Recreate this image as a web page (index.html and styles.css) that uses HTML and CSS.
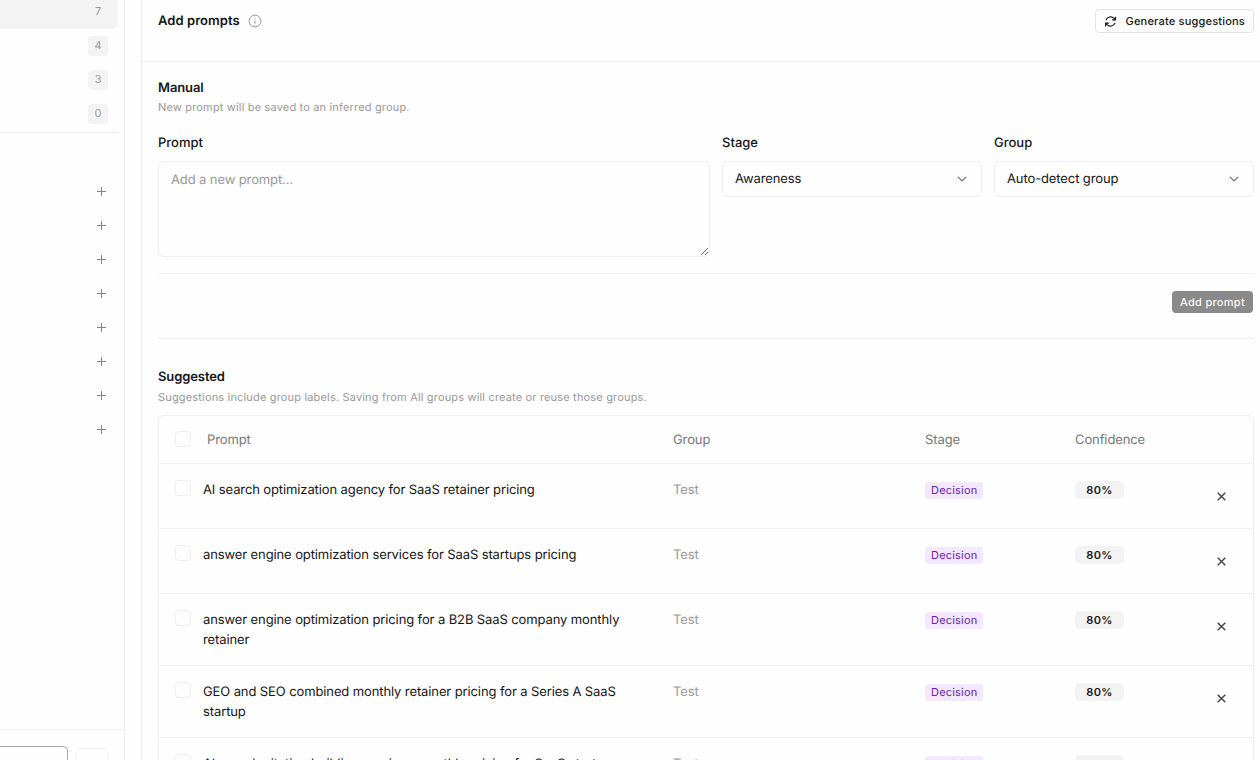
FILE: index.html
```html
<!DOCTYPE html>
<html lang="en">
<head>
  <meta charset="UTF-8">
  <meta name="viewport" content="width=device-width, initial-scale=1.0">
  <title>Add prompts</title>
  <link rel="stylesheet" href="styles.css">
</head>
<body>
  <svg class="sprite" aria-hidden="true">
    <symbol id="plus" viewBox="0 0 11 11"><path d="M5.5 1v9M1 5.5h9"/></symbol>
    <symbol id="close" viewBox="0 0 11 11"><path d="M1.7 1.7l7.6 7.6M9.3 1.7l-7.6 7.6"/></symbol>
    <symbol id="chevron" viewBox="0 0 12 12"><path d="M2 4l4 4 4-4"/></symbol>
  </svg>

  <aside class="sidebar">
    <nav class="filters">
      <div class="filter active"><span class="count">7</span></div>
      <div class="filter"><span class="count">4</span></div>
      <div class="filter"><span class="count">3</span></div>
      <div class="filter"><span class="count">0</span></div>
    </nav>
    <div class="groups">
      <button class="add-group" aria-label="Add"><svg><use href="#plus"/></svg></button>
      <button class="add-group" aria-label="Add"><svg><use href="#plus"/></svg></button>
      <button class="add-group" aria-label="Add"><svg><use href="#plus"/></svg></button>
      <button class="add-group" aria-label="Add"><svg><use href="#plus"/></svg></button>
      <button class="add-group" aria-label="Add"><svg><use href="#plus"/></svg></button>
      <button class="add-group" aria-label="Add"><svg><use href="#plus"/></svg></button>
      <button class="add-group" aria-label="Add"><svg><use href="#plus"/></svg></button>
      <button class="add-group" aria-label="Add"><svg><use href="#plus"/></svg></button>
    </div>
    <div class="sidebar-footer">
      <div class="footer-input"></div>
      <div class="footer-button"></div>
    </div>
  </aside>

  <main class="panel">
    <header class="panel-header">
      <h1>Add prompts</h1>
      <svg class="info" viewBox="0 0 14 14"><circle cx="7" cy="7" r="5.9"/><path d="M7 6.4v3.4M7 4.1v1"/></svg>
      <button class="generate">
        <svg viewBox="0 0 24 24"><path d="M21 3v6h-6M3 21v-6h6M3.5 9.5A9 9 0 0 1 18.4 6.2L21 9M20.5 14.5A9 9 0 0 1 5.6 17.8L3 15"/></svg>
        Generate suggestions
      </button>
    </header>

    <section class="manual">
      <h2>Manual</h2>
      <p class="hint">New prompt will be saved to an inferred group.</p>
      <div class="fields">
        <div class="field">
          <label for="prompt">Prompt</label>
          <textarea id="prompt" placeholder="Add a new prompt..."></textarea>
        </div>
        <div class="field">
          <label>Stage</label>
          <div class="select">Awareness <svg><use href="#chevron"/></svg></div>
        </div>
        <div class="field">
          <label>Group</label>
          <div class="select">Auto-detect group <svg><use href="#chevron"/></svg></div>
        </div>
      </div>
      <div class="actions">
        <button class="add-prompt">Add prompt</button>
      </div>
    </section>

    <section class="suggested">
      <h2>Suggested</h2>
      <p class="hint">Suggestions include group labels. Saving from All groups will create or reuse those groups.</p>
      <div class="table">
        <div class="row head">
          <span class="check"></span>
          <span class="prompt">Prompt</span>
          <span>Group</span>
          <span>Stage</span>
          <span>Confidence</span>
        </div>
        <div class="row">
          <span class="check"></span>
          <span class="prompt">AI search optimization agency for SaaS retainer pricing</span>
          <span class="group">Test</span>
          <span><span class="stage">Decision</span></span>
          <span><span class="confidence">80%</span></span>
          <button class="dismiss" aria-label="Dismiss"><svg><use href="#close"/></svg></button>
        </div>
        <div class="row">
          <span class="check"></span>
          <span class="prompt">answer engine optimization services for SaaS startups pricing</span>
          <span class="group">Test</span>
          <span><span class="stage">Decision</span></span>
          <span><span class="confidence">80%</span></span>
          <button class="dismiss" aria-label="Dismiss"><svg><use href="#close"/></svg></button>
        </div>
        <div class="row tall">
          <span class="check"></span>
          <span class="prompt">answer engine optimization pricing for a B2B SaaS company monthly retainer</span>
          <span class="group">Test</span>
          <span><span class="stage">Decision</span></span>
          <span><span class="confidence">80%</span></span>
          <button class="dismiss" aria-label="Dismiss"><svg><use href="#close"/></svg></button>
        </div>
        <div class="row tall">
          <span class="check"></span>
          <span class="prompt">GEO and SEO combined monthly retainer pricing for a Series A SaaS startup</span>
          <span class="group">Test</span>
          <span><span class="stage">Decision</span></span>
          <span><span class="confidence">80%</span></span>
          <button class="dismiss" aria-label="Dismiss"><svg><use href="#close"/></svg></button>
        </div>
        <div class="row tall">
          <span class="check"></span>
          <span class="prompt">AI search citation building services monthly pricing for SaaS startups</span>
          <span class="group">Test</span>
          <span><span class="stage">Decision</span></span>
          <span><span class="confidence">80%</span></span>
          <button class="dismiss" aria-label="Dismiss"><svg><use href="#close"/></svg></button>
        </div>
      </div>
    </section>
  </main>
</body>
</html>
```
FILE: styles.css
```css
* {
  box-sizing: border-box;
}
body {
  margin: 0;
  height: 760px;
  display: flex;
  gap: 16px;
  overflow: hidden;
  background: #fefefe;
  color: #161618;
  font-family: Inter, "Liberation Sans", sans-serif;
  font-size: 13px;
  line-height: 20px;
  letter-spacing: -0.11px;
  text-rendering: geometricPrecision;
}
h1, h2, p {
  margin: 0;
}
h1, h2 {
  font-size: 13px;
  font-weight: 600;
  line-height: 20px;
  letter-spacing: -0.1px;
}
button {
  font: inherit;
  color: inherit;
  letter-spacing: inherit;
  text-rendering: inherit;
  border: 0;
  padding: 0;
  background: none;
}
svg {
  fill: none;
  stroke: currentColor;
}
.sprite {
  display: none;
}

/* sidebar */
.sidebar {
  width: 125px;
  flex: none;
  display: flex;
  flex-direction: column;
  border-right: 1px solid #eeeeee;
}
.filters {
  width: 118px;
  height: 133px;
  border-bottom: 1px solid #eeeeee;
}
.filter {
  height: 34px;
  display: flex;
  justify-content: flex-end;
  align-items: center;
  padding: 0 10px 0 0;
}
.filter.active {
  height: 29px;
  padding-bottom: 6px;
  border-radius: 0 0 6px 0;
  background: #f3f3f3;
}
.count {
  width: 20px;
  height: 20px;
  border-radius: 4px;
  background: #f3f3f3;
  color: #999999;
  font-size: 11px;
  line-height: 19px;
  text-align: center;
}
.groups {
  display: flex;
  flex-direction: column;
  align-items: flex-end;
  padding: 41px 16px 0 0;
}
.add-group {
  width: 13px;
  height: 34px;
  display: flex;
  align-items: center;
  justify-content: center;
  color: #858585;
}
.add-group svg {
  width: 11px;
  height: 11px;
}
.sidebar-footer {
  height: 31px;
  margin-top: auto;
  display: flex;
  gap: 8px;
  border-top: 1px solid #eeeeee;
}
.footer-input {
  width: 68px;
  height: 15px;
  margin-top: 16px;
  border: 1px solid #aaaaaa;
  border-width: 1px 1px 0 0;
  border-radius: 0 5px 0 0;
}
.footer-button {
  width: 32px;
  height: 13px;
  margin-top: 18px;
  border: 1px solid #f1f1f1;
  border-bottom: 0;
  border-radius: 5px 5px 0 0;
}

/* main panel */
.panel {
  flex: 1;
  height: 760px;
  overflow: hidden;
  border-left: 1px solid #eeeeee;
}
.panel-header {
  height: 62px;
  display: flex;
  align-items: flex-start;
  padding: 9px 6px 0 16px;
  border-bottom: 1px solid #f0f0f0;
}
.panel-header h1 {
  margin-top: 2px;
  letter-spacing: 0.06px;
}
.info {
  width: 14px;
  height: 14px;
  margin: 5px 0 0 8px;
  color: #999999;
}
.generate {
  height: 24px;
  margin-left: auto;
  display: flex;
  align-items: center;
  gap: 8px;
  padding: 0 8px;
  border: 1px solid #e4e4e4;
  border-radius: 4px;
  font-size: 11px;
  font-weight: 500;
  letter-spacing: 0.2px;
}
.generate svg {
  width: 13px;
  height: 13px;
  stroke-width: 2.2;
}
.manual {
  margin: 0 6px 0 16px;
  padding-top: 16px;
  height: 277px;
  border-bottom: 1px solid #f0f0f0;
}
.hint {
  color: #999999;
  font-size: 11px;
  letter-spacing: 0.17px;
}
.manual .hint {
  line-height: 19px;
}
.fields {
  display: grid;
  grid-template-columns: 552px 260px 260px;
  gap: 12px;
  height: 157px;
  padding-top: 16px;
  border-bottom: 1px solid #f0f0f0;
}
.field label {
  display: block;
  height: 28px;
  font-weight: 500;
  letter-spacing: 0;
}
textarea {
  display: block;
  width: 552px;
  height: 96px;
  padding: 8px 12px;
  border: 1px solid #eeeeee;
  border-radius: 6px;
  background: transparent;
  font: inherit;
  letter-spacing: inherit;
  text-rendering: inherit;
  resize: vertical;
}
textarea::placeholder {
  color: #999999;
}
.select {
  height: 36px;
  display: flex;
  align-items: center;
  justify-content: space-between;
  padding: 0 13px 0 12px;
  border: 1px solid #eeeeee;
  border-radius: 6px;
}
.select svg {
  width: 12px;
  height: 12px;
  stroke-width: 1.2;
  color: #777777;
}
.actions {
  display: flex;
  justify-content: flex-end;
  padding: 17px 1px 0 0;
}
.add-prompt {
  height: 22px;
  padding: 0 8px;
  border-radius: 4px;
  background: #8a8a8a;
  color: #f8f8f8;
  font-size: 11px;
  font-weight: 500;
  letter-spacing: 0.3px;
}
.suggested {
  margin: 0 6px 0 16px;
  padding-top: 28px;
}

/* suggestions table */
.table {
  margin-top: 8px;
  border: 1px solid #eeeeee;
  border-radius: 6px 6px 0 0;
}
.row {
  height: 65px;
  display: grid;
  grid-template-columns: 28px 470px 252px 150px 130px 32px;
  align-items: start;
  padding: 16px 16px 0;
  border-bottom: 1px solid #f0f0f0;
}
.row.tall {
  height: 72px;
}
.row.head {
  height: 48px;
  padding-top: 14px;
  color: #777777;
}
.check {
  width: 16px;
  height: 16px;
  border: 1px solid #eeeeee;
  border-radius: 4px;
}
.head .check {
  margin-top: 1px;
}
.prompt {
  padding-right: 42px;
}
.head .prompt {
  padding-left: 4px;
}
.group {
  color: #999999;
}
.stage, .confidence {
  display: block;
  width: fit-content;
  font-size: 11px;
}
.stage {
  margin-top: 2px;
  padding: 0 6px;
  border-radius: 3px;
  background: #f3e8ff;
  color: #6b21a8;
  line-height: 17px;
  letter-spacing: 0.2px;
}
.confidence {
  width: 49px;
  margin-top: 1px;
  border-radius: 5px;
  background: #f3f3f3;
  font-weight: 600;
  line-height: 18px;
  letter-spacing: 0.4px;
  text-align: center;
}
.dismiss {
  width: 33px;
  height: 33px;
  display: flex;
  align-items: center;
  justify-content: center;
  color: #444444;
}
.dismiss svg {
  width: 11px;
  height: 11px;
  stroke-width: 1.4;
}
```
